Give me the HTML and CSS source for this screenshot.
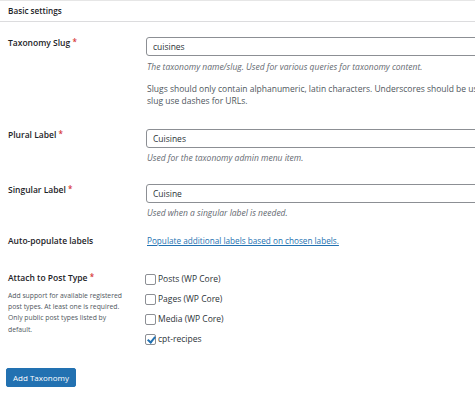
FILE: index.html
```html
<!DOCTYPE html>
<html>
<head>
    <title>Basic settings</title>
    <link rel="stylesheet" href="styles.css">
</head>
<body>
    <div class="postbox">
        <h2 class="postbox-title">Basic settings</h2>

        <div class="form-rows">
            <div class="row row-first">
                <label class="row-label" for="slug">Taxonomy Slug <span class="required">*</span></label>
                <div class="row-field">
                    <input type="text" id="slug" class="text-input" value="cuisines">
                    <p class="description">The taxonomy name/slug. Used for various queries for taxonomy content.</p>
                    <p class="note">Slugs should only contain alphanumeric, latin characters. Underscores should be used in place of spaces.<br>slug use dashes for URLs.</p>
                </div>
            </div>

            <div class="row">
                <label class="row-label" for="plural">Plural Label <span class="required">*</span></label>
                <div class="row-field">
                    <input type="text" id="plural" class="text-input" value="Cuisines">
                    <p class="description">Used for the taxonomy admin menu item.</p>
                </div>
            </div>

            <div class="row row-singular">
                <label class="row-label" for="singular">Singular Label <span class="required">*</span></label>
                <div class="row-field">
                    <input type="text" id="singular" class="text-input" value="Cuisine">
                    <p class="description">Used when a singular label is needed.</p>
                </div>
            </div>

            <div class="row row-auto">
                <span class="row-label">Auto-populate labels</span>
                <div class="row-field">
                    <a href="#" class="link">Populate additional labels based on chosen labels.</a>
                </div>
            </div>

            <div class="row row-last">
                <div class="row-label">
                    Attach to Post Type <span class="required">*</span>
                    <p class="help">Add support for available registered<br>post types. At least one is required.<br>Only public post types listed by<br>default.</p>
                </div>
                <div class="row-field">
                    <ul class="checks">
                        <li><label><input type="checkbox"> Posts (WP Core)</label></li>
                        <li><label><input type="checkbox"> Pages (WP Core)</label></li>
                        <li><label><input type="checkbox"> Media (WP Core)</label></li>
                        <li><label><input type="checkbox" checked> cpt-recipes</label></li>
                    </ul>
                </div>
            </div>
        </div>
    </div>

    <button class="button-primary">Add Taxonomy</button>
</body>
</html>
```

FILE: styles.css
```css
body {
    margin: 0;
    font-family: "Open Sans", "Noto Sans", sans-serif;
    font-size: 8.5px;
    line-height: 12px;
    color: #1d2327;
    background: #fff;
    overflow: hidden;
    width: 475px;
}
.postbox {
    border-top: 1px solid #e6e6e6;
    width: 700px;
}
.postbox-title {
    margin: 0;
    padding: 3px 8px 4px;
    font-size: 8.2px;
    line-height: 13px;
    font-weight: 600;
    border-bottom: 1px solid #dcdcde;
}
.row {
    display: grid;
    grid-template-columns: 139px 1fr;
    padding: 0 0 20px 8px;
}
.row-first {
    padding-top: 15px;
    padding-bottom: 22px;
}
.row-singular {
    padding-bottom: 16px;
}
.row-auto {
    padding-bottom: 25px;
}
.row-last {
    padding-bottom: 19px;
}
.row-label {
    font-weight: 600;
}
.required {
    color: #d63638;
    font-size: 8px;
    vertical-align: top;
    line-height: 9px;
}
.row-field p {
    margin: 0;
}
.text-input {
    display: block;
    box-sizing: border-box;
    width: 420px;
    height: 19px;
    margin: 0 0 4px -1px;
    padding: 0 6px;
    border: 1px solid #8c8f94;
    border-radius: 3px;
    font-family: inherit;
    font-size: 8.5px;
    color: #2c3338;
    background: #fff;
}
.row-first .text-input {
    margin-bottom: 5px;
}
.description {
    color: #646970;
    font-style: italic;
}
.row-field .note {
    margin-top: 10px;
    color: #50575e;
    white-space: nowrap;
}
.link {
    color: #2271b1;
    font-size: 8.2px;
}
.help {
    margin: 6px 0 0;
    font-weight: 400;
    font-size: 6.8px;
    line-height: 11.2px;
    color: #50575e;
    white-space: nowrap;
}
.checks {
    list-style: none;
    margin: -3px 0 0 -2px;
    padding: 0;
}
.checks li {
    height: 20px;
    display: flex;
    align-items: center;
}
.checks label {
    display: flex;
    align-items: center;
    gap: 2px;
    color: #2c3338;
}
.checks input {
    appearance: none;
    width: 11px;
    height: 11px;
    margin: 0;
    border: 1px solid #8c8f94;
    border-radius: 2px;
    background: #fff;
    position: relative;
}
.checks input:checked::after {
    content: "";
    position: absolute;
    left: 3px;
    top: 0px;
    width: 3px;
    height: 6px;
    border: solid #2271b1;
    border-width: 0 2px 2px 0;
    transform: rotate(40deg);
}
.button-primary {
    display: block;
    margin: 0 0 0 6px;
    height: 19px;
    padding: 0 6px;
    border: 1px solid #2271b1;
    border-radius: 2px;
    background: #2271b1;
    color: #fff;
    font-family: inherit;
    font-size: 8px;
}
```
